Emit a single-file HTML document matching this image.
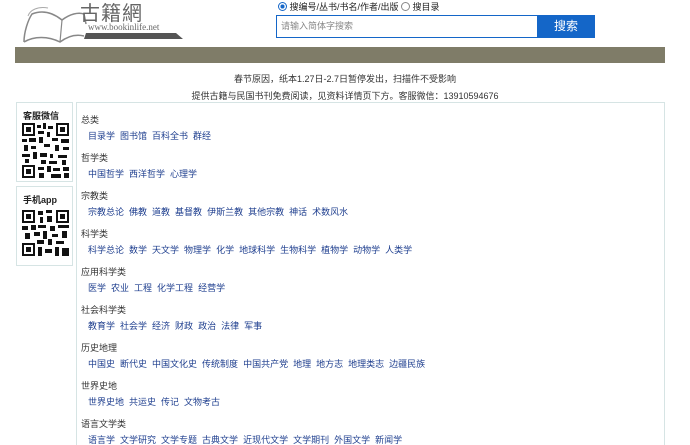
<!DOCTYPE html>
<html><head><meta charset="utf-8"><style>
*{margin:0;padding:0;box-sizing:border-box}
html,body{width:690px;height:445px;overflow:hidden}
body{background:#fff;font-family:"Liberation Sans","Noto Sans CJK SC",sans-serif;color:#333;position:relative}
.abs{position:absolute}
.bar{left:15px;top:47px;width:650px;height:16px;background:#7f7c68}
.notice{left:0;width:690px;text-align:center;font-size:9px;color:#333}
.side{left:16px;width:57px;border:1px solid #d6e4e4;background:#fff}
.side b{display:block;font-size:9px;color:#222;margin:6px 0 0 6px}
.main{left:76px;top:102px;width:589px;height:360px;border:1px solid #d6e4e4}
.cat{position:absolute;left:4px;font-size:9px;color:#333}
.links{position:absolute;left:11px;font-size:9px;color:#1f3f8f;word-spacing:0}
.links span{margin-right:5px}
</style></head><body>
<svg class="abs" style="left:18px;top:2px" width="170" height="44">
<path d="M6 40 C6 30 10 18 14 12 C24 8 34 10 44 18 C52 12 60 10 66 12 L68 22" fill="none" stroke="#888" stroke-width="1.5"/>
<path d="M6 40 C16 34 30 34 42 40 C50 34 58 32 66 34" fill="none" stroke="#888" stroke-width="1.5"/>
<path d="M44 18 L42 40" stroke="#888" stroke-width="1.2"/>
<path d="M10 14 C12 8 20 4 30 6" fill="none" stroke="#aaa" stroke-width="1"/>
<polygon points="68,31 158,31 165,37 66,37" fill="#555"/>
</svg>
<div class="abs" style="left:80px;top:0px;font-size:20px;color:#666;letter-spacing:1px;font-family:'Noto Sans CJK TC',sans-serif;line-height:24px">古籍網</div>
<div class="abs" style="left:88px;top:22px;font-size:9px;color:#666;font-family:'Liberation Serif',serif">www.bookinlife.net</div>

<div class="abs" style="left:278px;top:1px;font-size:9px;color:#222;line-height:12px">
<span style="display:inline-block;width:9px;height:9px;border-radius:50%;border:1px solid #1466c8;background:radial-gradient(#1466c8 40%,#fff 45%);vertical-align:-1px"></span> 搜编号/丛书/书名/作者/出版 <span style="display:inline-block;width:9px;height:9px;border-radius:50%;border:1px solid #888;vertical-align:-1px"></span> 搜目录</div>
<div class="abs" style="left:276px;top:15px;width:262px;height:23px;border:1px solid #1466c8;font-size:9px;color:#888;line-height:21px;padding-left:4px">请输入简体字搜索</div>
<div class="abs" style="left:537px;top:15px;width:58px;height:23px;background:#1466c8;color:#fff;font-size:12px;text-align:center;line-height:23px">搜索</div>

<div class="abs bar"></div>
<div class="abs notice" style="top:72px">春节原因，纸本1.27日-2.7日暂停发出，扫描件不受影响</div>
<div class="abs notice" style="top:89px">提供古籍与民国书刊免费阅读，见资料详情页下方。客服微信：13910594676</div>

<div class="abs side" style="top:102px;height:80px"><b>客服微信</b></div>
<div class="abs side" style="top:186px;height:80px"><b>手机app</b></div>
<svg class="abs" style="left:22px;top:123px" width="47" height="55" viewBox="0 0 47 55">
<g fill="#111">
<rect x="0" y="0" width="13" height="13"/><rect x="34" y="0" width="13" height="13"/><rect x="0" y="42" width="13" height="13"/>
<rect x="15" y="2" width="4" height="3"/><rect x="21" y="0" width="3" height="6"/><rect x="26" y="3" width="5" height="3"/><rect x="16" y="8" width="6" height="3"/><rect x="25" y="9" width="3" height="5"/>
<rect x="0" y="16" width="5" height="3"/><rect x="7" y="15" width="7" height="4"/><rect x="17" y="14" width="4" height="6"/><rect x="30" y="15" width="6" height="3"/><rect x="39" y="16" width="8" height="4"/>
<rect x="2" y="22" width="4" height="6"/><rect x="9" y="23" width="5" height="3"/><rect x="22" y="21" width="6" height="3"/><rect x="33" y="22" width="4" height="6"/><rect x="41" y="24" width="6" height="3"/>
<rect x="0" y="31" width="8" height="3"/><rect x="11" y="29" width="4" height="7"/><rect x="18" y="30" width="7" height="4"/><rect x="28" y="31" width="3" height="4"/><rect x="36" y="32" width="9" height="3"/>
<rect x="3" y="36" width="4" height="4"/><rect x="19" y="37" width="5" height="4"/><rect x="27" y="38" width="8" height="3"/><rect x="40" y="37" width="4" height="5"/>
<rect x="16" y="44" width="6" height="3"/><rect x="25" y="43" width="4" height="6"/><rect x="31" y="45" width="7" height="3"/><rect x="41" y="44" width="6" height="4"/><rect x="17" y="50" width="5" height="5"/><rect x="29" y="51" width="10" height="4"/><rect x="42" y="50" width="5" height="5"/>
</g>
<g fill="#fff"><rect x="2" y="2" width="9" height="9"/><rect x="36" y="2" width="9" height="9"/><rect x="2" y="44" width="9" height="9"/></g>
<g fill="#111"><rect x="4" y="4" width="5" height="5"/><rect x="38" y="4" width="5" height="5"/><rect x="4" y="46" width="5" height="5"/></g>
</svg>
<svg class="abs" style="left:22px;top:210px" width="47" height="46" viewBox="0 0 47 46">
<g fill="#111">
<rect x="0" y="0" width="13" height="13"/><rect x="34" y="0" width="13" height="13"/><rect x="0" y="33" width="13" height="13"/>
<rect x="16" y="1" width="5" height="4"/><rect x="24" y="0" width="6" height="3"/><rect x="18" y="7" width="3" height="6"/><rect x="25" y="6" width="5" height="6"/>
<rect x="0" y="16" width="6" height="4"/><rect x="9" y="15" width="5" height="5"/><rect x="16" y="15" width="8" height="3"/><rect x="28" y="16" width="5" height="5"/><rect x="36" y="15" width="11" height="3"/>
<rect x="3" y="23" width="5" height="6"/><rect x="12" y="22" width="6" height="4"/><rect x="21" y="21" width="4" height="8"/><rect x="30" y="24" width="6" height="3"/><rect x="40" y="21" width="5" height="7"/>
<rect x="15" y="30" width="7" height="4"/><rect x="26" y="29" width="4" height="6"/><rect x="34" y="31" width="8" height="3"/>
<rect x="16" y="37" width="4" height="9"/><rect x="23" y="39" width="7" height="4"/><rect x="33" y="37" width="4" height="9"/><rect x="40" y="38" width="7" height="8"/>
</g>
<g fill="#fff"><rect x="2" y="2" width="9" height="9"/><rect x="36" y="2" width="9" height="9"/><rect x="2" y="35" width="9" height="9"/></g>
<g fill="#111"><rect x="4" y="4" width="5" height="5"/><rect x="38" y="4" width="5" height="5"/><rect x="4" y="37" width="5" height="5"/></g>
</svg>

<div class="abs main">
<div class="cat" style="top:10px">总类</div>
<div class="links" style="top:26px"><span>目录学</span><span>图书馆</span><span>百科全书</span><span>群经</span></div>
<div class="cat" style="top:48px">哲学类</div>
<div class="links" style="top:64px"><span>中国哲学</span><span>西洋哲学</span><span>心理学</span></div>
<div class="cat" style="top:86px">宗教类</div>
<div class="links" style="top:102px"><span>宗教总论</span><span>佛教</span><span>道教</span><span>基督教</span><span>伊斯兰教</span><span>其他宗教</span><span>神话</span><span>术数风水</span></div>
<div class="cat" style="top:124px">科学类</div>
<div class="links" style="top:140px"><span>科学总论</span><span>数学</span><span>天文学</span><span>物理学</span><span>化学</span><span>地球科学</span><span>生物科学</span><span>植物学</span><span>动物学</span><span>人类学</span></div>
<div class="cat" style="top:162px">应用科学类</div>
<div class="links" style="top:178px"><span>医学</span><span>农业</span><span>工程</span><span>化学工程</span><span>经营学</span></div>
<div class="cat" style="top:200px">社会科学类</div>
<div class="links" style="top:216px"><span>教育学</span><span>社会学</span><span>经济</span><span>财政</span><span>政治</span><span>法律</span><span>军事</span></div>
<div class="cat" style="top:238px">历史地理</div>
<div class="links" style="top:254px"><span>中国史</span><span>断代史</span><span>中国文化史</span><span>传统制度</span><span>中国共产党</span><span>地理</span><span>地方志</span><span>地理类志</span><span>边疆民族</span></div>
<div class="cat" style="top:276px">世界史地</div>
<div class="links" style="top:292px"><span>世界史地</span><span>共运史</span><span>传记</span><span>文物考古</span></div>
<div class="cat" style="top:314px">语言文学类</div>
<div class="links" style="top:330px"><span>语言学</span><span>文学研究</span><span>文学专题</span><span>古典文学</span><span>近现代文学</span><span>文学期刊</span><span>外国文学</span><span>新闻学</span></div>
</div>
</body></html>
